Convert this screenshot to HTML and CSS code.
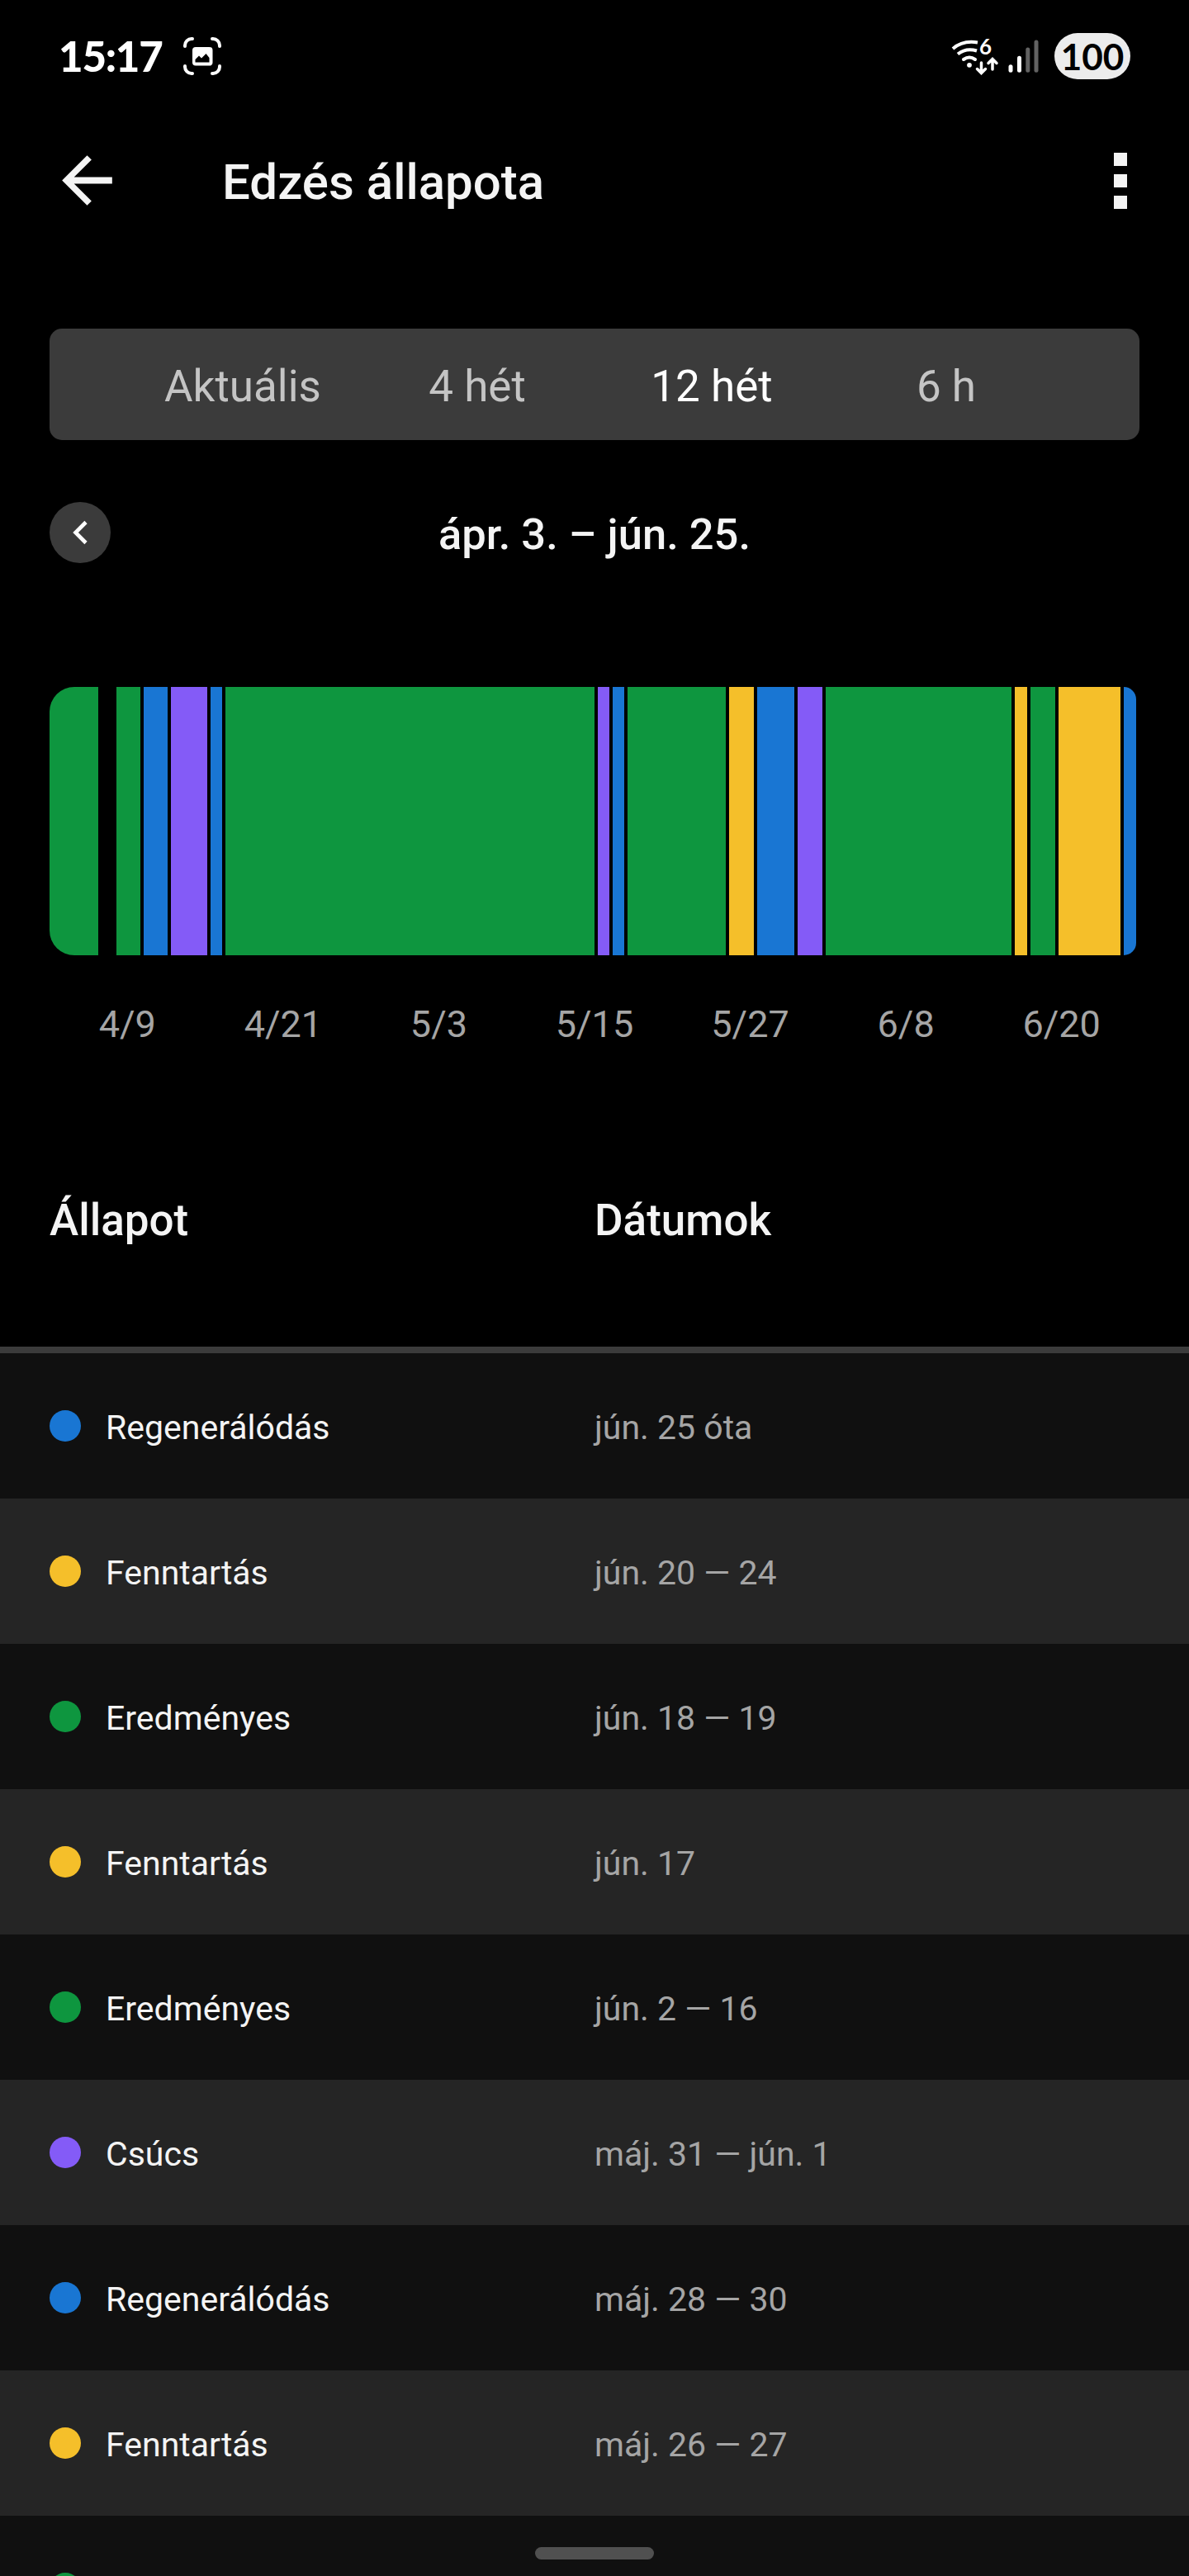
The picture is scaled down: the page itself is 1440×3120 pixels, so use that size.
FILE: index.html
```
<!DOCTYPE html>
<html lang="hu">

<head>
    <meta charset="UTF-8">
    <meta name="viewport" content="width=device-width, initial-scale=1.0">
    <title>Edzés állapota</title>

    <link rel="stylesheet" href="styles.css">
</head>

<body>

    <div class="statusbar">
        <span class="clock">15:17</span>
        <svg class="shot-icon" width="48" height="48" viewBox="0 0 48 48">
            <g fill="none" stroke="#fff" stroke-width="4" stroke-linecap="round">
                <path d="M3 12V11a8 8 0 0 1 8-8h1" />
                <path d="M36 3h1a8 8 0 0 1 8 8v1" />
                <path d="M45 36v1a8 8 0 0 1-8 8h-1" />
                <path d="M12 45h-1a8 8 0 0 1-8-8v-1" />
            </g>
            <rect x="12" y="13" width="24.500" height="22.500" rx="4" fill="#fff" />
            <path d="M15.500 31.500v-3.500l4.500-4.500 3 3 5.500-5.500 4 5v5.500z" fill="#000" />
        </svg>
        <svg class="net-icons" width="110" height="56" viewBox="1150 40 110 56">
            <g fill="none" stroke="#fff" stroke-width="4" stroke-linecap="round">
                <path d="M1154 59Q1166 48.500 1184 51.500" stroke-linecap="butt" />
                <path d="M1160 65.500Q1170 57.500 1183 61.500" stroke-linecap="butt" />
                <path d="M1167 72Q1174 67 1181 72" />
                <path d="M1188.500 76v11M1183.500 83.500l5 5 5-5" stroke-width="3.500" />
                <path d="M1202 84V73M1197 76.500l5-5 5 5" stroke-width="3.500" />
            </g>
            <circle cx="1174" cy="78.800" r="2.900" fill="#fff" />
            <text class="wifi-six" x="1186" y="66.300">6</text>
            <g fill="#fff">
                <rect x="1221.500" y="78.300" width="5" height="9.500" rx="2.500" />
                <rect x="1232" y="67.800" width="5" height="20" rx="2.500" />
                <rect x="1242.300" y="57.500" width="5" height="30.300" rx="2.500" fill="#626262" />
                <rect x="1252.500" y="48.500" width="5" height="39.300" rx="2.500" fill="#626262" />
            </g>
        </svg>
        <span class="battery">100</span>
    </div>

    <div class="topbar">
        <svg class="back" width="91" height="91" viewBox="0 0 24 24">
            <path d="M20 10.950H7.830l5.590-5.540L12 4l-8 8 8 8 1.410-1.410L7.830 13.050H20z" fill="#f4f4f4" />
        </svg>
        <h1>Edzés állapota</h1>
        <div class="menu"><i></i><i></i><i></i></div>
    </div>

    <div class="tabs">
        <span>Aktuális</span>
        <span>4 hét</span>
        <span class="active">12 hét</span>
        <span>6 h</span>
    </div>

    <div class="period">
        <div class="prev">
            <svg width="20" height="30" viewBox="0 0 20 30">
                <path d="M17 2.500L4.500 15 17 27.500" fill="none" stroke="#fff" stroke-width="4.600" />
            </svg>
        </div>
        <h2>ápr. 3. – jún. 25.</h2>
    </div>

    <div class="chart">
        <div class="green" style="width: 59px"></div>
        <div style="width: 14px"></div>
        <div class="green" style="width: 29px"></div>
        <div class="blue" style="width: 29px"></div>
        <div class="purple" style="width: 44px"></div>
        <div class="blue" style="width: 14px"></div>
        <div class="green" style="width: 447px"></div>
        <div class="purple" style="width: 14px"></div>
        <div class="blue" style="width: 14px"></div>
        <div class="green" style="width: 119px"></div>
        <div class="yellow" style="width: 30px"></div>
        <div class="blue" style="width: 45px"></div>
        <div class="purple" style="width: 30px"></div>
        <div class="green" style="width: 225px"></div>
        <div class="yellow" style="width: 15px"></div>
        <div class="green" style="width: 30px"></div>
        <div class="yellow" style="width: 75px"></div>
        <div class="blue" style="width: 15px"></div>
    </div>
    <div class="days">
        <span>4/9</span>
        <span>4/21</span>
        <span>5/3</span>
        <span>5/15</span>
        <span>5/27</span>
        <span>6/8</span>
        <span>6/20</span>
    </div>

    <div class="head">
        <h3>Állapot</h3>
        <h3>Dátumok</h3>
    </div>

    <div class="list">
        <div class="row">
            <div class="state"><i class="dot blue"></i><span>Regenerálódás</span></div>
            <div class="date">jún. 25 óta</div>
        </div>
        <div class="row">
            <div class="state"><i class="dot yellow"></i><span>Fenntartás</span></div>
            <div class="date">jún. 20 — 24</div>
        </div>
        <div class="row">
            <div class="state"><i class="dot green"></i><span>Eredményes</span></div>
            <div class="date">jún. 18 — 19</div>
        </div>
        <div class="row">
            <div class="state"><i class="dot yellow"></i><span>Fenntartás</span></div>
            <div class="date">jún. 17</div>
        </div>
        <div class="row">
            <div class="state"><i class="dot green"></i><span>Eredményes</span></div>
            <div class="date">jún. 2 — 16</div>
        </div>
        <div class="row">
            <div class="state"><i class="dot purple"></i><span>Csúcs</span></div>
            <div class="date">máj. 31 — jún. 1</div>
        </div>
        <div class="row">
            <div class="state"><i class="dot blue"></i><span>Regenerálódás</span></div>
            <div class="date">máj. 28 — 30</div>
        </div>
        <div class="row">
            <div class="state"><i class="dot yellow"></i><span>Fenntartás</span></div>
            <div class="date">máj. 26 — 27</div>
        </div>
        <div class="row">
            <div class="state"><i class="dot green"></i></div>
        </div>
    </div>

    <div class="homebar"></div>

</body>

</html>
```

FILE: styles.css
```
* {
    box-sizing: border-box;
}

body {
    margin: 0;
    width: 1440px;
    height: 3120px;
    overflow: hidden;
    position: relative;
    background-color: #000000;
    color: #f4f4f4;
    font-family: Roboto, sans-serif;
}

h1,
h2,
h3 {
    margin: 0;
    font-weight: 500;
}

.green {
    background-color: #0e963f;
}

.blue {
    background-color: #1976d3;
}

.purple {
    background-color: #845bf7;
}

.yellow {
    background-color: #f5bf2a;
}

/* status bar */
.statusbar {
    display: flex;
    align-items: center;
    height: 136px;
    padding: 0 71px 0 71px;
    font-family: Lato, sans-serif;
    font-weight: 900;
}

.clock {
    width: 150px;
    padding-bottom: 2px;
    font-size: 51px;
    letter-spacing: -1.2px;
    color: #ffffff;
}

.net-icons {
    margin-left: auto;
    margin-right: 17px;
}

.wifi-six {
    font-size: 26px;
    font-weight: 700;
    fill: #ffffff;
}

.battery {
    width: 92px;
    height: 56px;
    border-radius: 28px;
    background-color: #ececec;
    color: #000000;
    font-size: 44px;
    font-weight: 700;
    line-height: 56px;
    text-align: center;
}

/* top bar */
.topbar {
    display: flex;
    align-items: center;
    height: 165px;
    padding: 0 75px 0 60px;
}

.topbar h1 {
    margin-left: 118px;
    padding-top: 3px;
    font-size: 60px;
}

.menu {
    display: flex;
    flex-direction: column;
    gap: 10px;
    margin-left: auto;
}

.menu i {
    width: 16px;
    height: 16px;
    background-color: #f4f4f4;
}

/* tabs */
.tabs {
    display: grid;
    grid-template-columns: repeat(4, 284px);
    justify-content: center;
    margin: 97px 60px 0;
    height: 135px;
    padding-top: 5px;
    border-radius: 15px;
    background-color: #3b3b3b;
    color: #c4c4c4;
    font-size: 53px;
    line-height: 131px;
    text-align: center;
}

.tabs .active {
    color: #ffffff;
}

.period {
    display: grid;
    grid-template-columns: 74px 1fr 74px;
    align-items: center;
    height: 74px;
    margin: 75px 60px 0;
}

.period h2 {
    padding-top: 4px;
    font-size: 52.500px;
    text-align: center;
}

.prev {
    display: flex;
    align-items: center;
    justify-content: center;
    height: 74px;
    border-radius: 50%;
    background-color: #3b3b3b;
}

/* chart */
.chart {
    display: flex;
    gap: 4px;
    height: 325px;
    margin: 150px 60px 0;
}

.chart div:first-child {
    border-radius: 30px 0 0 30px;
}

.chart div:last-child {
    border-radius: 0 15px 15px 0;
}

.days {
    display: grid;
    grid-template-columns: repeat(7, 1fr);
    margin: 54px 60px 0;
    height: 60px;
    color: #a5a5a5;
    font-size: 45px;
    line-height: 60px;
    text-align: center;
}

/* table */
.head {
    display: grid;
    align-items: center;
    height: 368px;
    padding: 53px 0 0 60px;
    border-bottom: 8px solid #3b3b3b;
}

.head,
.row {
    grid-template-columns: 660px 1fr;
}

.head h3 {
    font-size: 53px;
}

.row {
    display: grid;
    align-items: center;
    height: 176px;
    padding-left: 60px;
    background-color: #101010;
    font-size: 41px;
}

.row:nth-child(even) {
    background-color: #252525;
}

.state {
    display: flex;
    align-items: center;
}

.state span,
.date {
    padding-top: 4px;
}

.date {
    color: #a5a5a5;
}

.dot {
    width: 38px;
    height: 38px;
    margin-right: 30px;
    border-radius: 50%;
}

/* lies over the list */
.homebar {
    position: absolute;
    left: 648px;
    bottom: 20px;
    width: 144px;
    height: 15px;
    border-radius: 8px;
    background-color: #505050;
}
```
